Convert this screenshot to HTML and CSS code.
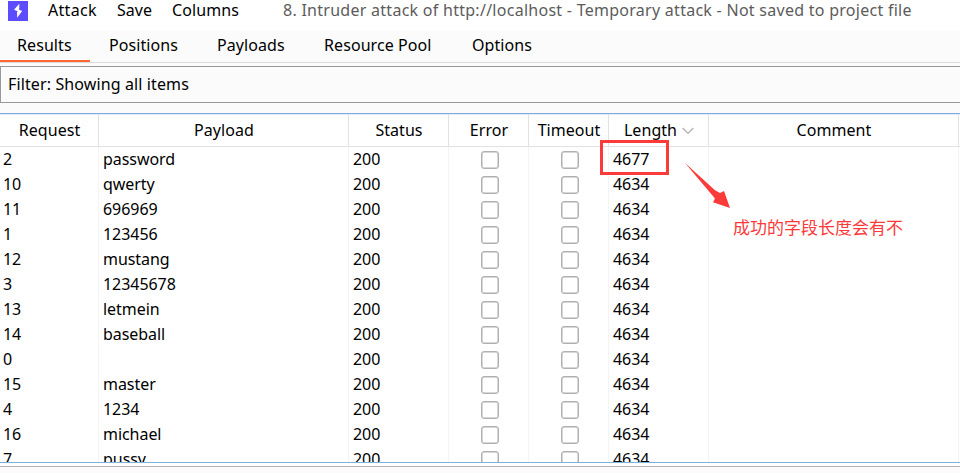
FILE: index.html
```html
<!DOCTYPE html>
<html lang="en">
<head>
<meta charset="utf-8">
<title>Intruder attack</title>
<link rel="stylesheet" href="styles.css">
</head>
<body>
<header class="menubar">
  <svg class="logo" viewBox="0 0 20 20"><rect width="20" height="20" fill="#5b4cff"/><path d="M11.3 2.7L6 8.7 9.6 10.2 9 11.4 9.2 16.8 14.2 9.9 10.7 8.5 11.3 7.3z" fill="#fff"/></svg>
  <span class="menu attack">Attack</span><span class="menu save">Save</span><span class="menu columns">Columns</span>
  <span class="title">8. Intruder attack of http://localhost - Temporary attack - Not saved to project file</span>
</header>
<nav class="tabs">
  <span class="tab results active">Results</span><span class="tab positions">Positions</span><span class="tab payloads">Payloads</span><span class="tab pool">Resource Pool</span><span class="tab options">Options</span>
</nav>
<div class="filter"><span>Filter: Showing all items</span></div>
<main class="table">
  <div class="row head"><span>Request</span><span>Payload</span><span>Status</span><span>Error</span><span>Timeout</span><span class="sorted">Length<svg class="chevron" viewBox="0 0 12 8"><path d="M.7 1L6 6.5 11.3 1" fill="none" stroke="#afafaf" stroke-width="1.2"/></svg></span><span>Comment</span><span></span></div>
  <div class="body" id="rows"></div>
</main>
<footer class="footer"></footer>
<div class="mark-box"></div>
<svg class="mark-arrow" viewBox="0 0 48 48"><path d="M.8 .8L31 28.2 36 31 40 29 46 46 29 40.2 31 36.5z" fill="#fb3a3a"/></svg>
<div class="mark-note">成功的字段长度会有不</div>
<script src="script.js"></script>
</body>
</html>
```
FILE: styles.css
```css
* { box-sizing: border-box; }
body {
  margin: 0; width: 960px; height: 473px; overflow: hidden;
  display: flex; flex-direction: column; position: relative;
  background: #fbfbfb; color: #000;
  font: 16px/22px "Noto Sans", "Noto Sans CJK SC", sans-serif;
  white-space: nowrap;
}
.menubar { height: 31px; flex: none; display: flex; background: #fff; padding-left: 8px; line-height: 20px; }
.logo { width: 20px; height: 20px; margin-top: 1px; flex: none; }
.menu { margin-left: 20px; }
.attack { width: 49px; letter-spacing: .3px; }
.save { width: 35px; }
.columns { width: 67px; letter-spacing: .1px; }
.title { margin-left: 44px; color: #5c5c5c; letter-spacing: .27px; }
.tabs { height: 32px; flex: none; display: flex; border-bottom: 1px solid #dadada; }
.tab { padding-top: 3px; letter-spacing: .08px; }
.results { width: 90px; padding-left: 17px; }
.positions { width: 108px; padding-left: 19px; }
.payloads { width: 107px; padding-left: 19px; }
.pool { width: 147px; padding-left: 19px; }
.options { padding-left: 20px; }
.active { border-bottom: 2px solid #ff6633; height: 31px; }
.filter { height: 37px; flex: none; margin-top: 3px; border: 1px solid #999; border-right: 0; padding: 6px 0 0 7px; letter-spacing: .12px; }
.table { height: 350px; flex: none; margin-top: 10px; border-top: 1px solid #7faadb; border-bottom: 1px solid #7fb0d8; background: #fff; overflow: hidden; box-shadow: inset 0 1px #e0eefa; }
.row { display: grid; grid-template-columns: 99px 250px 100px 80px 80px 100px 250px 1px; height: 25px; }
.row > span { border-right: 1px solid #f4f4f4; padding-left: 4px; overflow: hidden; line-height: 24px; letter-spacing: -.05px; }
.row > span:first-child { padding-left: 3px; }
.head { height: 33px; border-bottom: 1px solid #e2e2e2; }
.head > span, .head > span:first-child { text-align: center; padding: 0 0 0 1px; line-height: 32px; border-color: #e2e2e2; letter-spacing: .05px; }
.row > .sorted { display: flex; align-items: center; justify-content: center; gap: 5px; }
.chevron { width: 12px; height: 8px; margin-top: 1px; }
.row > .tick { display: flex; justify-content: center; padding: 4px 0 0 3px; }
.box { width: 18px; height: 18px; border: 1px solid #b0b0b0; border-radius: 3px; box-shadow: inset 0 0 0 .5px #b0b0b0; }
.footer { height: 4px; flex: none; background: #fff; border-bottom: 1px solid #bcb1b4; }
.mark-box { position: absolute; left: 600px; top: 140px; width: 69px; height: 35px; border: 3px solid #fb3a3a; }
.mark-arrow { position: absolute; left: 684px; top: 162px; width: 48px; height: 48px; }
.mark-note { position: absolute; left: 733px; top: 215px; color: #fb3a3a; font: 400 17px/23px "Noto Sans CJK SC", sans-serif; }
```
FILE: script.js
```js
const data = [[2,'password'],[10,'qwerty'],[11,'696969'],[1,'123456'],[12,'mustang'],[3,'12345678'],[13,'letmein'],[14,'baseball'],[0,''],[15,'master'],[4,'1234'],[16,'michael'],[7,'pussy']];
document.getElementById('rows').innerHTML = data.map(([id, word], i) =>
  `<div class="row"><span>${id}</span><span>${word}</span><span>200</span><span class="tick"><i class="box"></i></span><span class="tick"><i class="box"></i></span><span>${i ? 4634 : 4677}</span><span></span><span></span></div>`).join('');
```
